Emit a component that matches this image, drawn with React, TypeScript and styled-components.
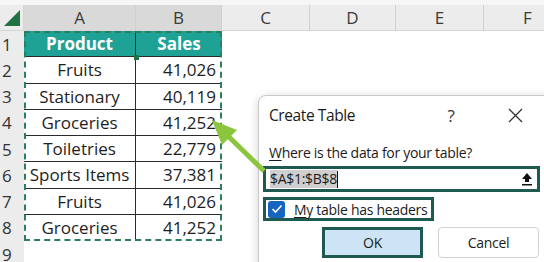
import { createGlobalStyle } from "styled-components";
import styled from "styled-components";

const GlobalStyle = createGlobalStyle`
    html, body {
        margin: 0;
        padding: 0;
        width: 544px;
        height: 262px;
        overflow: hidden;
        background: #ffffff;
    }
`;

const colWidths = [24, 112, 86, 88, 86, 88, 88];

const Page = styled.div`
    position: relative;
    width: 544px;
    height: 262px;
    overflow: hidden;
    font-family: "Open Sans", "Noto Sans", sans-serif;
`;

const TopStrip = styled.div`
    height: 5px;
    background: #f6f6f6;
`;

const Sheet = styled.div`
    display: grid;
    grid-template-columns: ${colWidths.map((w) => w + "px").join(" ")};
    grid-template-rows: 26px repeat(9, 26.25px);
`;

const Corner = styled.div`
    background: #ececec;
    border-right: 1px solid #d4d4d4;
    border-bottom: 1px solid #d4d4d4;
    display: flex;
    align-items: flex-end;
    justify-content: flex-end;
    padding: 0 3px 4px 0;
    box-sizing: border-box;
`;

const Triangle = styled.div`
    width: 0;
    height: 0;
    border-left: 16px solid transparent;
    border-bottom: 16px solid #217346;
`;

const ColHead = styled.div<{ $selected?: boolean }>`
    background: ${(p) => (p.$selected ? "#d9d9d9" : "#ececec")};
    border-right: 1px solid #d0d0d0;
    border-bottom: 1px solid #d4d4d4;
    color: #3a3a3a;
    font-size: 17px;
    display: flex;
    align-items: center;
    justify-content: center;
    box-sizing: border-box;
`;

const RowHead = styled.div`
    background: #ececec;
    color: #333;
    font-size: 17px;
    display: flex;
    align-items: center;
    padding-left: 2px;
    box-sizing: border-box;
`;

const Cell = styled.div<{ $kind?: "head" | "text" | "num" | "empty"; $last?: boolean }>`
    font-size: 17px;
    display: flex;
    align-items: center;
    box-sizing: border-box;
    white-space: nowrap;
    overflow: visible;
    color: #1e1e1e;
    background: ${(p) => (p.$kind === "head" ? "#1fa296" : "#ffffff")};
    ${(p) =>
        p.$kind === "head"
            ? "color: #ffffff; font-weight: 700; justify-content: center;"
            : p.$kind === "num"
            ? "justify-content: flex-end; padding-right: 6px;"
            : p.$kind === "text"
            ? "justify-content: center;"
            : ""}
    ${(p) =>
        p.$kind && p.$kind !== "empty"
            ? `border-bottom: ${p.$last ? "none" : "1px solid #2a2a2a"};`
            : ""}
`;

const TextCell = styled(Cell)`
    border-right: 1px solid #2a2a2a;
`;

const Selection = styled.div`
    position: absolute;
    left: 24px;
    top: 31px;
    width: 198px;
    height: 210px;
    box-sizing: border-box;
    border: 2px dashed #2b7f5e;
    pointer-events: none;

    &::after {
        content: "";
        position: absolute;
        left: 108px;
        top: 22px;
        width: 5px;
        height: 5px;
        background: #217346;
    }
`;

const Dialog = styled.div`
    position: absolute;
    left: 258px;
    top: 95px;
    width: 300px;
    height: 180px;
    background: #ffffff;
    border: 1px solid #c9c9c9;
    border-radius: 8px;
    box-shadow: 0 2px 10px rgba(0, 0, 0, 0.18);
    font-family: "Open Sans", "Noto Sans", sans-serif;
    color: #1b1b1b;
    box-sizing: border-box;
`;

const TitleBar = styled.div`
    height: 38px;
    display: flex;
    align-items: center;
    padding-left: 10px;
    font-size: 15.5px;
    letter-spacing: -0.4px;
`;

const Title = styled.span`
    width: 170px;
`;

const TitleButton = styled.span<{ $ml: number }>`
    width: 24px;
    margin-left: ${(p) => p.$ml}px;
    font-size: 17px;
    color: #333;
    display: flex;
    justify-content: center;
`;

const Body = styled.div`
    display: flex;
    flex-direction: column;
    padding: 6px 0 0 4px;
    font-size: 14px;
    letter-spacing: -0.3px;
`;

const Label = styled.div`
    padding-left: 6px;
    height: 24px;
    display: flex;
    align-items: center;

    u {
        text-underline-offset: 2px;
    }
`;

const RangeBox = styled.div`
    margin-top: 2px;
    width: 277px;
    height: 26px;
    border: 3px solid #1f5a50;
    box-sizing: border-box;
    display: flex;
    align-items: center;
    padding: 0 4px 0 4px;
`;

const RangeText = styled.span`
    background: #cfcfcf;
    line-height: 18px;
    flex: none;
`;

const Caret = styled.span`
    width: 1px;
    height: 17px;
    background: #111;
`;

const Grow = styled.span`
    flex: 1;
`;

const CheckRow = styled.div`
    margin-top: 5px;
    width: 171px;
    height: 24px;
    border: 3px solid #1f5a50;
    box-sizing: border-box;
    display: flex;
    align-items: center;
    gap: 9px;
    padding-left: 2px;
    white-space: nowrap;

    u {
        text-underline-offset: 2px;
    }
`;

const CheckBox = styled.span`
    width: 17px;
    height: 17px;
    border-radius: 3px;
    background: #1565c0;
    display: flex;
    align-items: center;
    justify-content: center;
`;

const ButtonRow = styled.div`
    margin-top: 6px;
    display: flex;
    gap: 15px;
    padding-left: 59px;
`;

const Button = styled.div<{ $primary?: boolean }>`
    width: 101px;
    height: 31px;
    box-sizing: border-box;
    display: flex;
    align-items: center;
    justify-content: center;
    border-radius: ${(p) => (p.$primary ? "0" : "4px")};
    background: ${(p) => (p.$primary ? "#cde4f6" : "#ffffff")};
    border: ${(p) => (p.$primary ? "3px solid #1f5a50" : "1px solid #d2d2d2")};
`;

const Arrow = styled.svg`
    position: absolute;
    left: 0;
    top: 0;
    pointer-events: none;
`;

const rows: [string, string][] = [
    ["Fruits", "41,026"],
    ["Stationary", "40,119"],
    ["Groceries", "41,252"],
    ["Toiletries", "22,779"],
    ["Sports Items", "37,381"],
    ["Fruits", "41,026"],
    ["Groceries", "41,252"],
];

const cols = ["A", "B", "C", "D", "E", "F"];

export default function App() {
    return (
        <Page>
            <GlobalStyle />
            <TopStrip />
            <Sheet>
                <Corner>
                    <Triangle />
                </Corner>
                {cols.map((c, i) => (
                    <ColHead key={c} $selected={i < 2}>
                        {c}
                    </ColHead>
                ))}

                <RowHead>1</RowHead>
                <TextCell $kind="head">Product</TextCell>
                <Cell $kind="head">Sales</Cell>
                <Cell $kind="empty" />
                <Cell $kind="empty" />
                <Cell $kind="empty" />
                <Cell $kind="empty" />

                {rows.map(([name, value], i) => (
                    <Row key={i} n={i + 2} name={name} value={value} last={i === rows.length - 1} />
                ))}

                <RowHead>9</RowHead>
                {cols.map((c) => (
                    <Cell key={c} $kind="empty" />
                ))}
            </Sheet>
            <Selection />

            <Dialog>
                <TitleBar>
                    <Title>Create Table</Title>
                    <TitleButton $ml={0}>?</TitleButton>
                    <TitleButton $ml={40}>
                        <svg width="15" height="15" viewBox="0 0 15 15">
                            <path d="M1 1 L14 14 M14 1 L1 14" stroke="#333" strokeWidth="1.3" />
                        </svg>
                    </TitleButton>
                </TitleBar>
                <Body>
                    <Label>
                        <span>
                            <u>W</u>here is the data for your table?
                        </span>
                    </Label>
                    <RangeBox>
                        <RangeText>$A$1:$B$8</RangeText>
                        <Caret />
                        <Grow />
                        <svg width="12" height="14" viewBox="0 0 12 14">
                            <path d="M6 1 L11 7 L8 7 L8 10 L4 10 L4 7 L1 7 Z" fill="#111" />
                            <rect x="1" y="12" width="10" height="1.5" fill="#111" />
                        </svg>
                    </RangeBox>
                    <CheckRow>
                        <CheckBox>
                            <svg width="12" height="10" viewBox="0 0 12 10">
                                <path d="M1.5 5 L4.5 8 L10.5 1.5" stroke="#fff" strokeWidth="1.6" fill="none" />
                            </svg>
                        </CheckBox>
                        <span>
                            <u>M</u>y table has headers
                        </span>
                    </CheckRow>
                    <ButtonRow>
                        <Button $primary>OK</Button>
                        <Button>Cancel</Button>
                    </ButtonRow>
                </Body>
            </Dialog>

            <Arrow width="544" height="262" viewBox="0 0 544 262">
                <line x1="264" y1="171" x2="226" y2="134" stroke="#8cc63e" strokeWidth="5" />
                <polygon points="212,120 237,130 222,145" fill="#8cc63e" />
            </Arrow>
        </Page>
    );
}

function Row(props: { n: number; name: string; value: string; last: boolean }) {
    return (
        <>
            <RowHead>{props.n}</RowHead>
            <TextCell $kind="text" $last={props.last}>
                {props.name}
            </TextCell>
            <Cell $kind="num" $last={props.last}>
                {props.value}
            </Cell>
            <Cell $kind="empty" />
            <Cell $kind="empty" />
            <Cell $kind="empty" />
            <Cell $kind="empty" />
        </>
    );
}
